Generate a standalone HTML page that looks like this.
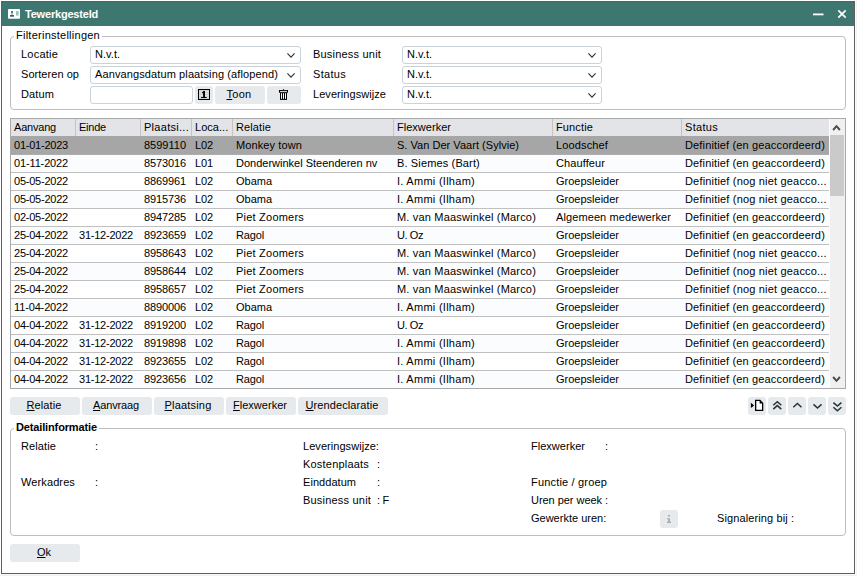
<!DOCTYPE html>
<html lang="nl"><head><meta charset="utf-8"><title>Tewerkgesteld</title><style>
*{box-sizing:border-box;margin:0;padding:0}
html,body{width:857px;height:576px;overflow:hidden;background:#fff}
body{font-family:"Liberation Sans",sans-serif;font-size:11px;color:#000;position:relative}
.edge-r{position:absolute;left:855px;top:0;width:2px;height:576px;background:linear-gradient(90deg,#fbfcfc 50%,#f1f4f4 50%)}
.edge-b{position:absolute;left:0;top:574px;width:857px;height:2px;background:linear-gradient(180deg,#f7f9f9 50%,#eef1f2 50%)}
.win{position:absolute;left:1px;top:1px;width:854px;height:573px;border:1px solid #5e5e5e;background:#fff}
.title{position:absolute;left:2px;top:2px;width:852px;height:24px;background:#3e7770}
.title .tt{position:absolute;left:23px;top:5px;font-weight:bold;font-size:11px;letter-spacing:-0.2px;color:#fff;line-height:14px;white-space:nowrap}
.t{position:absolute;white-space:nowrap;line-height:13px;height:13px}
.fs{position:absolute;border:1px solid #bdbdbd;border-radius:4px}
.lg{position:absolute;background:#fff;white-space:nowrap;line-height:13px;padding:0 2px 0 2px}
.cb{position:absolute;height:18px;border:1px solid #c9d3d9;border-radius:3px;background:#fff}
.cb .v{position:absolute;left:4px;top:1px;line-height:13px;white-space:nowrap}
.cb svg{position:absolute;right:5px;top:6px}
.btn{position:absolute;height:18px;background:#e6eaec;border-radius:3px;text-align:center;line-height:17px;white-space:nowrap;padding-right:2px}
.btn u{text-decoration:underline;text-underline-offset:1px}
.grid{position:absolute;left:10px;top:118px;width:836px;height:271px;border:1px solid #a9a9a9;background:#fff;overflow:hidden}
.ghead{position:absolute;left:0;top:0;width:818px;height:18px;background:#e2e4e8;border-bottom:1px solid #c4c4c4}
.hc{position:absolute;top:0;height:17px;border-right:1px solid #c4c4c4}
.hc span{position:absolute;left:3px;top:2px;line-height:13px;white-space:nowrap}
.grow{position:absolute;left:0;width:818px;height:18px;border-bottom:1px solid #c0c0c0}
.grow.sel{background:#a6a6a6;border-bottom-color:#adadad;height:19px}
.grow.sel .c{top:3px}
.c{position:absolute;top:2px;line-height:13px;white-space:nowrap;padding-left:3px;overflow:hidden}
.sb{position:absolute;left:818px;top:0;width:16px;height:269px;background:#f0f0f0;border-left:1px solid #fff}
.thumb{position:absolute;left:0px;top:16px;width:14px;height:61px;background:#cacaca}

.hc:last-child{border-right:none}
.grow.alt{background:#fafcfd}

</style></head>
<body>
<div class="edge-r"></div><div class="edge-b"></div>
<div class="win"></div>
<div class="title">
<svg style="position:absolute;left:6px;top:7px" width="12" height="10" viewBox="0 0 12 10"><rect x="0" y="0" width="12" height="9.8" rx="1" fill="#fff"/><circle cx="4" cy="3.1" r="1.05" fill="#2f6a63"/><rect x="3.5" y="3.8" width="1" height="2.4" fill="#5f918b"/><rect x="2" y="6" width="4" height="1.7" fill="#2f6a63"/><rect x="8" y="2.1" width="2.7" height="4.5" fill="#a3c1bc"/></svg>
<span class="tt">Tewerkgesteld</span>
<svg style="position:absolute;left:811px;top:11px" width="11" height="3" viewBox="0 0 11 3"><rect x="0" y="0.5" width="10.5" height="1.8" fill="#fff"/></svg>
<svg style="position:absolute;left:835px;top:7px" width="10" height="10" viewBox="0 0 10 10"><path d="M1.3 1.3 L8.7 8.7 M8.7 1.3 L1.3 8.7" stroke="#fff" stroke-width="1.7" fill="none"/></svg>
</div>

<div class="fs" style="left:10px;top:36px;width:836px;height:74px"></div>
<div class="lg" style="left:14px;top:29px;letter-spacing:0.25px">Filterinstellingen</div>

<span class="t" style="left:21px;top:48px;letter-spacing:0.22px">Locatie</span>
<span class="t" style="left:21px;top:68px;letter-spacing:0.05px">Sorteren op</span>
<span class="t" style="left:21px;top:88px;letter-spacing:0.12px">Datum</span>
<div class="cb" style="left:90px;top:46px;width:211px"><span class="v" style="letter-spacing:0.06px">N.v.t.</span><svg width="8" height="5" viewBox="0 0 8 5"><path d="M0.4 0.4 L4 4.1 L7.6 0.4" stroke="#333" stroke-width="1.15" fill="none"/></svg></div>
<div class="cb" style="left:90px;top:66px;width:211px"><span class="v" style="letter-spacing:0.11px">Aanvangsdatum plaatsing (aflopend)</span><svg width="8" height="5" viewBox="0 0 8 5"><path d="M0.4 0.4 L4 4.1 L7.6 0.4" stroke="#333" stroke-width="1.15" fill="none"/></svg></div>
<div class="cb" style="left:90px;top:86px;width:103px"></div>

<div class="btn" style="left:195px;top:86px;width:18px"><svg style="position:absolute;left:3px;top:3px" width="12" height="11" viewBox="0 0 12 11"><rect x="0.5" y="0.5" width="11" height="10" fill="#cfcfcf" stroke="#000" stroke-width="1"/><path d="M1.5 2.5H10.5M1.5 4.5H10.5M1.5 6.5H10.5M1.5 8.5H10.5" stroke="#f4f4f4" stroke-width="1" stroke-dasharray="1 1"/><path d="M4 3.7 L5.3 2 H7 V8 H8.7 V9 H3 V8 H5.1 V3.9 L4 4.6 Z" fill="#000"/></svg></div>
<div class="btn" style="left:215px;top:86px;width:50px;letter-spacing:0.29px"><u>T</u>oon</div>
<div class="btn" style="left:267px;top:86px;width:34px"><svg style="position:absolute;left:12px;top:3px" width="9" height="11" viewBox="0 0 9 11"><path d="M3.7 1.1 L4.5 0 L5.3 1.1 Z" fill="#000"/><rect x="0" y="1" width="9" height="2.7" fill="#000"/><rect x="1" y="1.9" width="7" height="0.9" fill="#fff"/><rect x="1" y="3.6" width="7" height="7.3" fill="#000"/><rect x="2" y="4.2" width="1" height="5.6" fill="#fff"/><rect x="4" y="4.2" width="1" height="5.6" fill="#fff"/><rect x="6" y="4.2" width="1" height="5.6" fill="#fff"/></svg></div>

<span class="t" style="left:313px;top:48px;letter-spacing:0.2px">Business unit</span>
<span class="t" style="left:313px;top:68px;letter-spacing:0.3px">Status</span>
<span class="t" style="left:313px;top:88px;letter-spacing:0.06px">Leveringswijze</span>
<div class="cb" style="left:402px;top:46px;width:200px"><span class="v" style="letter-spacing:0.06px">N.v.t.</span><svg width="8" height="5" viewBox="0 0 8 5"><path d="M0.4 0.4 L4 4.1 L7.6 0.4" stroke="#333" stroke-width="1.15" fill="none"/></svg></div>
<div class="cb" style="left:402px;top:66px;width:200px"><span class="v" style="letter-spacing:0.06px">N.v.t.</span><svg width="8" height="5" viewBox="0 0 8 5"><path d="M0.4 0.4 L4 4.1 L7.6 0.4" stroke="#333" stroke-width="1.15" fill="none"/></svg></div>
<div class="cb" style="left:402px;top:86px;width:200px"><span class="v" style="letter-spacing:0.06px">N.v.t.</span><svg width="8" height="5" viewBox="0 0 8 5"><path d="M0.4 0.4 L4 4.1 L7.6 0.4" stroke="#333" stroke-width="1.15" fill="none"/></svg></div>
<div class="grid">
<div class="ghead">
<div class="hc" style="left:0px;width:65px"><span style="letter-spacing:-0.2px">Aanvang</span></div>
<div class="hc" style="left:65px;width:65px"><span style="letter-spacing:-0.23px">Einde</span></div>
<div class="hc" style="left:130px;width:51px"><span style="letter-spacing:0.28px">Plaatsi...</span></div>
<div class="hc" style="left:181px;width:41px"><span style="letter-spacing:0.04px">Loca...</span></div>
<div class="hc" style="left:222px;width:161px"><span style="letter-spacing:0.11px">Relatie</span></div>
<div class="hc" style="left:383px;width:159px"><span style="letter-spacing:0.02px">Flexwerker</span></div>
<div class="hc" style="left:542px;width:129px"><span style="letter-spacing:0.13px">Functie</span></div>
<div class="hc" style="left:671px;width:147px"><span style="letter-spacing:0.3px">Status</span></div>
</div>
<div class="grow sel" style="top:17px"><span class="c" style="left:0px;width:65px;letter-spacing:-0.23px">01-01-2023</span><span class="c" style="left:130px;width:51px">8599110</span><span class="c" style="left:181px;width:41px;letter-spacing:-0.12px">L02</span><span class="c" style="left:222px;width:161px;letter-spacing:0.11px">Monkey town</span><span class="c" style="left:383px;width:159px;letter-spacing:0.03px">S. Van Der Vaart (Sylvie)</span><span class="c" style="left:542px;width:129px;letter-spacing:0.14px">Loodschef</span><span class="c" style="left:671px;width:147px;letter-spacing:0.15px">Definitief (en geaccordeerd)</span></div>
<div class="grow alt" style="top:36px"><span class="c" style="left:0px;width:65px;letter-spacing:-0.14px">01-11-2022</span><span class="c" style="left:130px;width:51px;letter-spacing:-0.12px">8573016</span><span class="c" style="left:181px;width:41px;letter-spacing:-0.12px">L01</span><span class="c" style="left:222px;width:161px">Donderwinkel Steenderen nv</span><span class="c" style="left:383px;width:159px;letter-spacing:0.14px">B. Siemes (Bart)</span><span class="c" style="left:542px;width:129px;letter-spacing:0.1px">Chauffeur</span><span class="c" style="left:671px;width:147px;letter-spacing:0.15px">Definitief (en geaccordeerd)</span></div>
<div class="grow" style="top:54px"><span class="c" style="left:0px;width:65px;letter-spacing:-0.23px">05-05-2022</span><span class="c" style="left:130px;width:51px;letter-spacing:-0.12px">8869961</span><span class="c" style="left:181px;width:41px;letter-spacing:-0.12px">L02</span><span class="c" style="left:222px;width:161px">Obama</span><span class="c" style="left:383px;width:159px;letter-spacing:0.27px">I. Ammi (Ilham)</span><span class="c" style="left:542px;width:129px">Groepsleider</span><span class="c" style="left:671px;width:147px;letter-spacing:0.18px">Definitief (nog niet geacco...</span></div>
<div class="grow alt" style="top:72px"><span class="c" style="left:0px;width:65px;letter-spacing:-0.23px">05-05-2022</span><span class="c" style="left:130px;width:51px;letter-spacing:-0.12px">8915736</span><span class="c" style="left:181px;width:41px;letter-spacing:-0.12px">L02</span><span class="c" style="left:222px;width:161px">Obama</span><span class="c" style="left:383px;width:159px;letter-spacing:0.27px">I. Ammi (Ilham)</span><span class="c" style="left:542px;width:129px">Groepsleider</span><span class="c" style="left:671px;width:147px;letter-spacing:0.18px">Definitief (nog niet geacco...</span></div>
<div class="grow" style="top:90px"><span class="c" style="left:0px;width:65px;letter-spacing:-0.23px">02-05-2022</span><span class="c" style="left:130px;width:51px;letter-spacing:-0.12px">8947285</span><span class="c" style="left:181px;width:41px;letter-spacing:-0.12px">L02</span><span class="c" style="left:222px;width:161px;letter-spacing:0.22px">Piet Zoomers</span><span class="c" style="left:383px;width:159px;letter-spacing:0.18px">M. van Maaswinkel (Marco)</span><span class="c" style="left:542px;width:129px;letter-spacing:0.1px">Algemeen medewerker</span><span class="c" style="left:671px;width:147px;letter-spacing:0.15px">Definitief (en geaccordeerd)</span></div>
<div class="grow alt" style="top:108px"><span class="c" style="left:0px;width:65px;letter-spacing:-0.23px">25-04-2022</span><span class="c" style="left:65px;width:65px;letter-spacing:-0.23px">31-12-2022</span><span class="c" style="left:130px;width:51px;letter-spacing:-0.12px">8923659</span><span class="c" style="left:181px;width:41px;letter-spacing:-0.12px">L02</span><span class="c" style="left:222px;width:161px;letter-spacing:-0.15px">Ragol</span><span class="c" style="left:383px;width:159px;letter-spacing:-0.42px">U. Oz</span><span class="c" style="left:542px;width:129px">Groepsleider</span><span class="c" style="left:671px;width:147px;letter-spacing:0.15px">Definitief (en geaccordeerd)</span></div>
<div class="grow" style="top:126px"><span class="c" style="left:0px;width:65px;letter-spacing:-0.23px">25-04-2022</span><span class="c" style="left:130px;width:51px;letter-spacing:-0.12px">8958643</span><span class="c" style="left:181px;width:41px;letter-spacing:-0.12px">L02</span><span class="c" style="left:222px;width:161px;letter-spacing:0.22px">Piet Zoomers</span><span class="c" style="left:383px;width:159px;letter-spacing:0.18px">M. van Maaswinkel (Marco)</span><span class="c" style="left:542px;width:129px">Groepsleider</span><span class="c" style="left:671px;width:147px;letter-spacing:0.18px">Definitief (nog niet geacco...</span></div>
<div class="grow alt" style="top:144px"><span class="c" style="left:0px;width:65px;letter-spacing:-0.23px">25-04-2022</span><span class="c" style="left:130px;width:51px;letter-spacing:-0.12px">8958644</span><span class="c" style="left:181px;width:41px;letter-spacing:-0.12px">L02</span><span class="c" style="left:222px;width:161px;letter-spacing:0.22px">Piet Zoomers</span><span class="c" style="left:383px;width:159px;letter-spacing:0.18px">M. van Maaswinkel (Marco)</span><span class="c" style="left:542px;width:129px">Groepsleider</span><span class="c" style="left:671px;width:147px;letter-spacing:0.18px">Definitief (nog niet geacco...</span></div>
<div class="grow" style="top:162px"><span class="c" style="left:0px;width:65px;letter-spacing:-0.23px">25-04-2022</span><span class="c" style="left:130px;width:51px;letter-spacing:-0.12px">8958657</span><span class="c" style="left:181px;width:41px;letter-spacing:-0.12px">L02</span><span class="c" style="left:222px;width:161px;letter-spacing:0.22px">Piet Zoomers</span><span class="c" style="left:383px;width:159px;letter-spacing:0.18px">M. van Maaswinkel (Marco)</span><span class="c" style="left:542px;width:129px">Groepsleider</span><span class="c" style="left:671px;width:147px;letter-spacing:0.18px">Definitief (nog niet geacco...</span></div>
<div class="grow alt" style="top:180px"><span class="c" style="left:0px;width:65px;letter-spacing:-0.14px">11-04-2022</span><span class="c" style="left:130px;width:51px;letter-spacing:-0.12px">8890006</span><span class="c" style="left:181px;width:41px;letter-spacing:-0.12px">L02</span><span class="c" style="left:222px;width:161px">Obama</span><span class="c" style="left:383px;width:159px;letter-spacing:0.27px">I. Ammi (Ilham)</span><span class="c" style="left:542px;width:129px">Groepsleider</span><span class="c" style="left:671px;width:147px;letter-spacing:0.15px">Definitief (en geaccordeerd)</span></div>
<div class="grow" style="top:198px"><span class="c" style="left:0px;width:65px;letter-spacing:-0.23px">04-04-2022</span><span class="c" style="left:65px;width:65px;letter-spacing:-0.23px">31-12-2022</span><span class="c" style="left:130px;width:51px;letter-spacing:-0.12px">8919200</span><span class="c" style="left:181px;width:41px;letter-spacing:-0.12px">L02</span><span class="c" style="left:222px;width:161px;letter-spacing:-0.15px">Ragol</span><span class="c" style="left:383px;width:159px;letter-spacing:-0.42px">U. Oz</span><span class="c" style="left:542px;width:129px">Groepsleider</span><span class="c" style="left:671px;width:147px;letter-spacing:0.15px">Definitief (en geaccordeerd)</span></div>
<div class="grow alt" style="top:216px"><span class="c" style="left:0px;width:65px;letter-spacing:-0.23px">04-04-2022</span><span class="c" style="left:65px;width:65px;letter-spacing:-0.23px">31-12-2022</span><span class="c" style="left:130px;width:51px;letter-spacing:-0.12px">8919898</span><span class="c" style="left:181px;width:41px;letter-spacing:-0.12px">L02</span><span class="c" style="left:222px;width:161px;letter-spacing:-0.15px">Ragol</span><span class="c" style="left:383px;width:159px;letter-spacing:0.27px">I. Ammi (Ilham)</span><span class="c" style="left:542px;width:129px">Groepsleider</span><span class="c" style="left:671px;width:147px;letter-spacing:0.15px">Definitief (en geaccordeerd)</span></div>
<div class="grow" style="top:234px"><span class="c" style="left:0px;width:65px;letter-spacing:-0.23px">04-04-2022</span><span class="c" style="left:65px;width:65px;letter-spacing:-0.23px">31-12-2022</span><span class="c" style="left:130px;width:51px;letter-spacing:-0.12px">8923655</span><span class="c" style="left:181px;width:41px;letter-spacing:-0.12px">L02</span><span class="c" style="left:222px;width:161px;letter-spacing:-0.15px">Ragol</span><span class="c" style="left:383px;width:159px;letter-spacing:0.27px">I. Ammi (Ilham)</span><span class="c" style="left:542px;width:129px">Groepsleider</span><span class="c" style="left:671px;width:147px;letter-spacing:0.15px">Definitief (en geaccordeerd)</span></div>
<div class="grow alt" style="top:252px"><span class="c" style="left:0px;width:65px;letter-spacing:-0.23px">04-04-2022</span><span class="c" style="left:65px;width:65px;letter-spacing:-0.23px">31-12-2022</span><span class="c" style="left:130px;width:51px;letter-spacing:-0.12px">8923656</span><span class="c" style="left:181px;width:41px;letter-spacing:-0.12px">L02</span><span class="c" style="left:222px;width:161px;letter-spacing:-0.15px">Ragol</span><span class="c" style="left:383px;width:159px;letter-spacing:0.27px">I. Ammi (Ilham)</span><span class="c" style="left:542px;width:129px">Groepsleider</span><span class="c" style="left:671px;width:147px;letter-spacing:0.15px">Definitief (en geaccordeerd)</span></div>
<div class="sb"><div class="thumb"></div>
<svg style="position:absolute;left:2px;top:5px" width="9" height="7" viewBox="0 0 9 7"><path d="M1.1 6 L4.5 2.2 L7.9 6" stroke="#4d4d4d" stroke-width="2" fill="none"/></svg>
<svg style="position:absolute;left:2px;top:257px" width="9" height="7" viewBox="0 0 9 7"><path d="M1.1 1 L4.5 4.8 L7.9 1" stroke="#4d4d4d" stroke-width="2" fill="none"/></svg>
</div>
</div>
<div class="btn" style="left:10px;top:397px;width:70px;letter-spacing:0.11px"><u>R</u>elatie</div>
<div class="btn" style="left:82px;top:397px;width:70px;letter-spacing:-0.14px"><u>A</u>anvraag</div>
<div class="btn" style="left:154px;top:397px;width:70px;letter-spacing:0.19px"><u>P</u>laatsing</div>
<div class="btn" style="left:226px;top:397px;width:70px;letter-spacing:0.02px"><u>F</u>lexwerker</div>
<div class="btn" style="left:298px;top:397px;width:90px;letter-spacing:0.1px"><u>U</u>rendeclaratie</div>

<div class="btn" style="left:748px;top:397px;width:18px"><svg style="position:absolute;left:0;top:0" width="18" height="18" viewBox="0 0 18 18"><path d="M2.9 5.8 L6.1 8.4 L2.9 11 Z" fill="#000"/><path d="M7.65 3.45 H12 L14.65 6.2 V13.35 H7.65 Z" fill="#fff" stroke="#000" stroke-width="1.3"/><path d="M11.6 3.4 V6.6 H14.7 Z" fill="#000"/></svg></div>
<div class="btn" style="left:768px;top:397px;width:18px"><svg style="position:absolute;left:0;top:0" width="18" height="18" viewBox="0 0 18 18"><path d="M5.3 8.2 L9.3 4.7 L13.3 8.2 M5.3 12.1 L9.3 8.6 L13.3 12.1" stroke="#27333b" stroke-width="1.5" fill="none"/></svg></div>
<div class="btn" style="left:788px;top:397px;width:18px"><svg style="position:absolute;left:0;top:0" width="18" height="18" viewBox="0 0 18 18"><path d="M5.3 10.3 L9.4 6.5 L13.5 10.3" stroke="#27333b" stroke-width="1.5" fill="none"/></svg></div>
<div class="btn" style="left:808px;top:397px;width:18px"><svg style="position:absolute;left:0;top:0" width="18" height="18" viewBox="0 0 18 18"><path d="M5.5 7.4 L9.5 11.1 L13.5 7.4" stroke="#27333b" stroke-width="1.5" fill="none"/></svg></div>
<div class="btn" style="left:828px;top:397px;width:18px"><svg style="position:absolute;left:0;top:0" width="18" height="18" viewBox="0 0 18 18"><path d="M5.4 5.6 L9.4 9.1 L13.4 5.6 M5.4 10.2 L9.4 13.7 L13.4 10.2" stroke="#27333b" stroke-width="1.5" fill="none"/></svg></div>

<div class="fs" style="left:10px;top:428px;width:836px;height:108px"></div>
<div class="lg" style="left:14px;top:421px;font-weight:bold;letter-spacing:-0.14px">Detailinformatie</div>

<span class="t" style="left:21px;top:440px;letter-spacing:0.11px">Relatie</span><span class="t" style="left:95px;top:440px;letter-spacing:-0.06px">:</span>
<span class="t" style="left:21px;top:476px;letter-spacing:0.11px">Werkadres</span><span class="t" style="left:95px;top:476px;letter-spacing:-0.06px">:</span>

<span class="t" style="left:303px;top:440px;letter-spacing:0.05px">Leveringswijze:</span>
<span class="t" style="left:303px;top:458px;letter-spacing:0.2px">Kostenplaats</span><span class="t" style="left:377px;top:458px;letter-spacing:-0.06px">:</span>
<span class="t" style="left:303px;top:476px;letter-spacing:0.05px">Einddatum</span><span class="t" style="left:377px;top:476px;letter-spacing:-0.06px">:</span>
<span class="t" style="left:303px;top:494px;letter-spacing:0.2px">Business unit</span><span class="t" style="left:377px;top:494px;letter-spacing:-0.28px">: F</span>

<span class="t" style="left:531px;top:440px;letter-spacing:0.02px">Flexwerker</span><span class="t" style="left:605px;top:440px;letter-spacing:-0.06px">:</span>
<span class="t" style="left:531px;top:476px;letter-spacing:0.18px">Functie / groep</span>
<span class="t" style="left:531px;top:494px;letter-spacing:-0.04px">Uren per week :</span>
<span class="t" style="left:531px;top:512px">Gewerkte uren:</span>
<div class="btn" style="left:660px;top:510px;width:18px"><svg style="position:absolute;left:0;top:0" width="18" height="18" viewBox="0 0 18 18"><path d="M8 5 H10 V6.6 H8 Z M7 8.3 H10 V11.7 H11 V12.9 H7 V11.7 H8.2 V9.3 H7 Z" fill="#a9a9a9"/></svg></div>
<span class="t" style="left:717px;top:512px;letter-spacing:0.11px">Signalering bij :</span>

<div class="btn" style="left:10px;top:544px;width:70px;letter-spacing:-0.03px"><u>O</u>k</div>
</body></html>
